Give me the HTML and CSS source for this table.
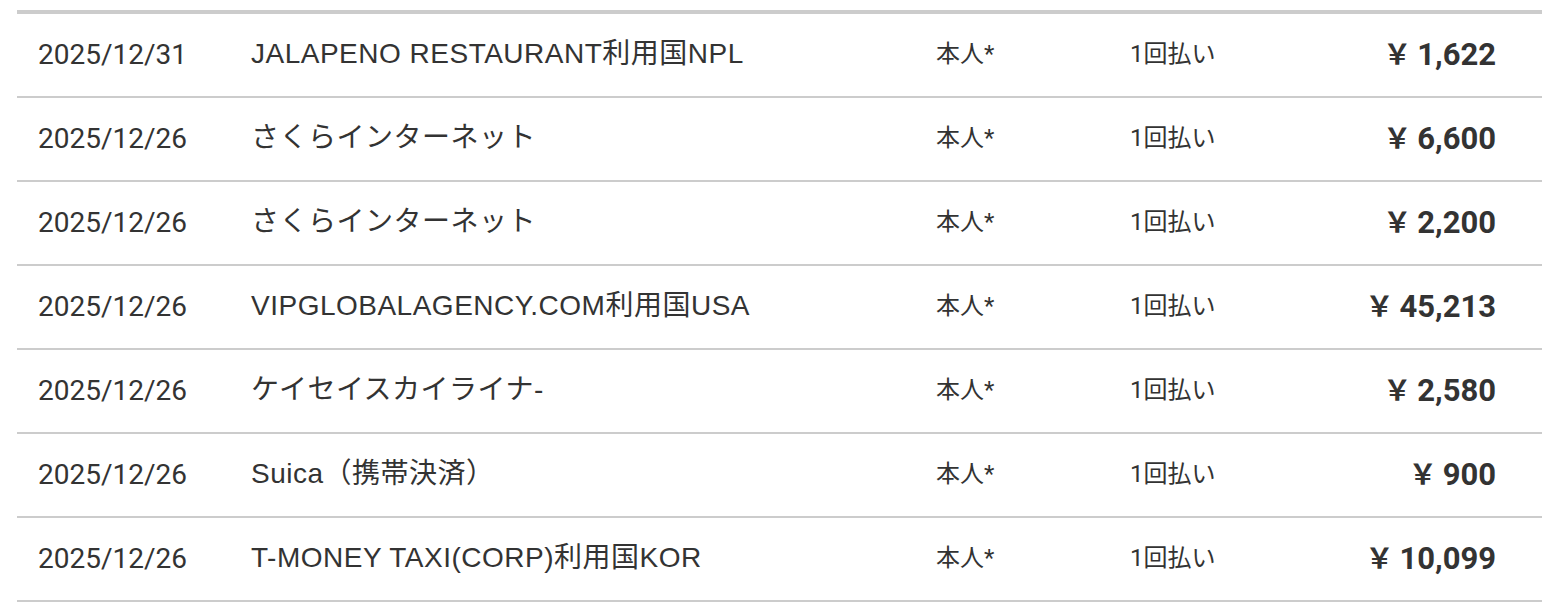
FILE: index.html
```html
<!DOCTYPE html>
<html lang="ja">
<head>
<meta charset="utf-8">
<title>利用明細</title>
<link rel="stylesheet" href="styles.css">
</head>
<body>
<div class="statement">
  <div class="row">
    <div class="date">2025/12/31</div>
    <div class="desc">JALAPENO RESTAURANT利用国NPL</div>
    <div class="user">本人*</div>
    <div class="pay">1回払い</div>
    <div class="amount"><span class="yen">￥</span>1,622</div>
  </div>
  <div class="row">
    <div class="date">2025/12/26</div>
    <div class="desc">さくらインターネット</div>
    <div class="user">本人*</div>
    <div class="pay">1回払い</div>
    <div class="amount"><span class="yen">￥</span>6,600</div>
  </div>
  <div class="row">
    <div class="date">2025/12/26</div>
    <div class="desc">さくらインターネット</div>
    <div class="user">本人*</div>
    <div class="pay">1回払い</div>
    <div class="amount"><span class="yen">￥</span>2,200</div>
  </div>
  <div class="row">
    <div class="date">2025/12/26</div>
    <div class="desc">VIPGLOBALAGENCY.COM利用国USA</div>
    <div class="user">本人*</div>
    <div class="pay">1回払い</div>
    <div class="amount"><span class="yen">￥</span>45,213</div>
  </div>
  <div class="row">
    <div class="date">2025/12/26</div>
    <div class="desc">ケイセイスカイライナ-</div>
    <div class="user">本人*</div>
    <div class="pay">1回払い</div>
    <div class="amount"><span class="yen">￥</span>2,580</div>
  </div>
  <div class="row">
    <div class="date">2025/12/26</div>
    <div class="desc">Suica（携帯決済）</div>
    <div class="user">本人*</div>
    <div class="pay">1回払い</div>
    <div class="amount"><span class="yen">￥</span>900</div>
  </div>
  <div class="row">
    <div class="date">2025/12/26</div>
    <div class="desc">T-MONEY TAXI(CORP)利用国KOR</div>
    <div class="user">本人*</div>
    <div class="pay">1回払い</div>
    <div class="amount"><span class="yen">￥</span>10,099</div>
  </div>
</div>
</body>
</html>
```

FILE: styles.css
```css
html, body {
  margin: 0;
  padding: 0;
  background: #ffffff;
}

body {
  padding: 10px 0 0 17px;
  font-family: Roboto, "Noto Sans CJK JP", sans-serif;
  color: #333333;
}

.statement {
  border-top: 4px solid #cccccc;
}

.row {
  display: grid;
  grid-template-columns: 213px 685px 194px 1fr auto;
  align-items: center;
  height: 82px;
  padding: 0 46px 0 21px;
  border-bottom: 2px solid #cccccc;
}

.date {
  font-size: 28px;
  padding-bottom: 2px;
}

.desc {
  font-family: "Liberation Sans", "Noto Sans CJK JP", sans-serif;
  font-size: 28px;
  letter-spacing: 0.5px;
  white-space: nowrap;
  padding-bottom: 8px;
}

.user,
.pay {
  font-size: 24px;
  padding-bottom: 8px;
}

.amount {
  font-size: 31px;
  font-weight: 700;
  text-align: right;
  white-space: nowrap;
  padding-bottom: 4px;
}

.yen {
  font-family: "Noto Sans CJK JP", sans-serif;
  font-size: 28px;
  margin-right: 6px;
}
```
